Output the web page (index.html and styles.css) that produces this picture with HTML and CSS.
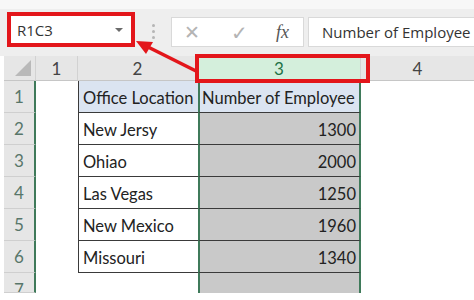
FILE: index.html
```html
<!DOCTYPE html>
<html lang="en">
<head>
  <meta charset="UTF-8">
  <title>R1C3 Name Box</title>
  <link rel="stylesheet" href="styles.css">
</head>
<body>
  <!-- Formula bar -->
  <div class="toolbar">
    <div class="name-box">
      <span>R1C3</span>
      <span class="drop"></span>
    </div>
    <div class="dots"><i></i><i></i><i></i></div>
    <div class="func-box">
      <span class="cancel">&#x2715;</span>
      <span class="ok">&#x2713;</span>
      <span class="fx">fx</span>
    </div>
    <div class="formula">Number of Employee</div>
  </div>

  <!-- Sheet grid -->
  <div class="sheet">
    <div class="corner"><span class="tri"></span></div>
    <div class="col-head">1</div>
    <div class="col-head">2</div>
    <div class="col-head sel">3</div>
    <div class="col-head last">4</div>

    <div class="row-head">1</div>
    <div class="cell"></div>
    <div class="cell tb head">Office Location</div>
    <div class="cell tb head c3">Number of Employee</div>
    <div class="cell"></div>

    <div class="row-head">2</div>
    <div class="cell"></div>
    <div class="cell tb">New Jersy</div>
    <div class="cell tb c3 num">1300</div>
    <div class="cell"></div>

    <div class="row-head">3</div>
    <div class="cell"></div>
    <div class="cell tb">Ohiao</div>
    <div class="cell tb c3 num">2000</div>
    <div class="cell"></div>

    <div class="row-head">4</div>
    <div class="cell"></div>
    <div class="cell tb">Las Vegas</div>
    <div class="cell tb c3 num">1250</div>
    <div class="cell"></div>

    <div class="row-head">5</div>
    <div class="cell"></div>
    <div class="cell tb">New Mexico</div>
    <div class="cell tb c3 num">1960</div>
    <div class="cell"></div>

    <div class="row-head">6</div>
    <div class="cell"></div>
    <div class="cell tb">Missouri</div>
    <div class="cell tb c3 num">1340</div>
    <div class="cell"></div>

    <div class="row-head cut">7</div>
    <div class="cell"></div>
    <div class="cell"></div>
    <div class="cell c3"></div>
    <div class="cell"></div>
  </div>

  <!-- Annotation: box round column 3 and arrow to the name box -->
  <div class="mark-col"></div>
  <svg class="arrow" width="474" height="300" viewBox="0 0 474 300">
    <line x1="196" y1="71" x2="146" y2="46" stroke="#e3161b" stroke-width="3.5"/>
    <polygon points="136,41 153,42 146,54" fill="#e3161b"/>
  </svg>
</body>
</html>
```

FILE: styles.css
```css
/* Reset */
* {
  margin: 0;
  padding: 0;
  box-sizing: border-box;
}

body {
  width: 474px;
  height: 300px;
  overflow: hidden;
  background: #ffffff;
  font-family: "Open Sans", "Liberation Sans", sans-serif;
  position: relative;
}

/* Formula bar */
.toolbar {
  height: 56px;
  background: linear-gradient(#f7f7f7 0, #f7f7f7 9px, #eeeeee 9px);
  display: flex;
  align-items: flex-start;
  padding: 12px 0 0 7px;
}

.name-box {
  width: 128px;
  height: 35px;
  background: #ffffff;
  border: 4px solid #e3161b;
  display: flex;
  align-items: center;
  justify-content: space-between;
  padding: 0 8px 0 6px;
  font-size: 15px;
  color: #333333;
}

.name-box .drop {
  width: 0;
  height: 0;
  border-left: 4px solid transparent;
  border-right: 4px solid transparent;
  border-top: 4px solid #6b6b6b;
}

.dots {
  width: 36px;
  display: flex;
  flex-direction: column;
  align-items: center;
  gap: 3px;
  padding-top: 12px;
}

.dots i {
  width: 3px;
  height: 3px;
  background: #b5b5b5;
  border-radius: 50%;
}

.func-box {
  margin-top: 5px;
  width: 133px;
  height: 30px;
  background: #ffffff;
  border: 1px solid #d9d9d9;
  display: flex;
  align-items: center;
  padding-left: 12px;
  color: #b4b4b4;
}

.func-box .cancel {
  font-size: 19px;
  width: 47px;
}

.func-box .ok {
  font-size: 20px;
  width: 45px;
}

.func-box .fx {
  font-family: "Liberation Serif", serif;
  font-style: italic;
  font-size: 18px;
  color: #555555;
}

.formula {
  margin: 5px 0 0 4px;
  flex: 1;
  height: 30px;
  background: #ffffff;
  border: 1px solid #d9d9d9;
  border-right: none;
  padding-left: 13px;
  font-size: 15px;
  line-height: 28px;
  color: #333333;
  white-space: nowrap;
  overflow: hidden;
}

/* Sheet */
.sheet {
  display: grid;
  grid-template-columns: 32px 42px 120px 163px 1fr;
  grid-template-rows: 25px repeat(6, 32px) 20px;
  margin-left: 4px;
  font-family: Lato, "Liberation Sans", sans-serif;
  font-size: 16.5px;
  color: #222222;
}

.corner,
.col-head {
  background: #e6e6e6;
  border-bottom: 1px solid #c6c6c6;
  border-right: 1px solid #d2d2d2;
}

.corner {
  position: relative;
}

.corner .tri {
  position: absolute;
  right: 4px;
  bottom: 4px;
  width: 0;
  height: 0;
  border-left: 16px solid transparent;
  border-bottom: 16px solid #b9b9b9;
}

.col-head {
  display: flex;
  align-items: center;
  justify-content: center;
  font-size: 17px;
  color: #444444;
}

.col-head.sel {
  background: #d4efdc;
  color: #217346;
}

.col-head.last {
  border-right: none;
}

.row-head {
  background: #e6e6e6;
  border-bottom: 1px solid #cfcfcf;
  border-right: 2px solid #3f7a5a;
  display: flex;
  align-items: center;
  justify-content: center;
  font-size: 17px;
  color: #58766a;
}

.row-head.cut {
  align-items: flex-start;
  padding-top: 8px;
  line-height: 17px;
  overflow: hidden;
}

.cell {
  display: flex;
  align-items: flex-end;
  padding: 0 3px 4px 4px;
  white-space: nowrap;
}

.cell.tb {
  border-bottom: 1px solid #3a3a3a;
  border-left: 1px solid #3a3a3a;
}

.cell.head {
  background: #dbe4f1;
}

.cell.c3 {
  background: #c9c9c9;
  border-left: 2px solid #3f7a5a;
  border-right: 2px solid #3f7a5a;
  padding-left: 2px;
}

.cell.head.c3 {
  background: #dbe4f1;
}

.cell.num {
  justify-content: flex-end;
}

/* Annotation overlay */
.mark-col {
  position: absolute;
  left: 195px;
  top: 54px;
  width: 175px;
  height: 29px;
  border: 4px solid #e3161b;
}

.arrow {
  position: absolute;
  left: 0;
  top: 0;
}
```
